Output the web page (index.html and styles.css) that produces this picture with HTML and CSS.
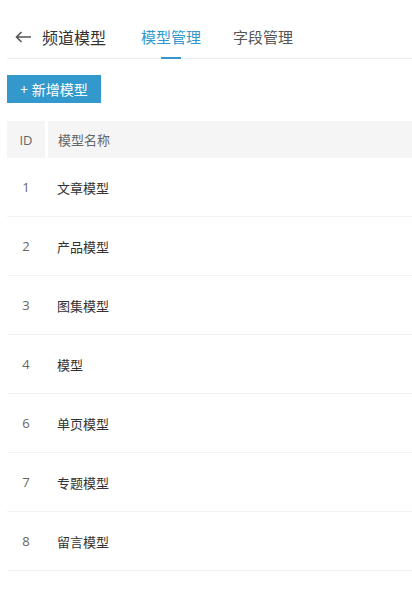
FILE: index.html
```html
<!DOCTYPE html>
<html lang="zh-CN">
<head>
    <meta charset="UTF-8">
    <meta name="viewport" content="width=device-width, initial-scale=1.0">
    <title>频道模型</title>
    <link rel="stylesheet" href="styles.css">
</head>
<body>
    <div class="page">
        <div class="header">
            <a class="back" href="#">
                <svg width="16" height="12" viewBox="0 0 16 12" fill="none" stroke="#555" stroke-width="1.6">
                    <path d="M16 6H1.5M6.5 1L1.5 6l5 5"/>
                </svg>
            </a>
            <div class="title">频道模型</div>
            <a class="tab active" href="#">模型管理</a>
            <a class="tab" href="#">字段管理</a>
        </div>

        <button class="btn-add">+ 新增模型</button>

        <div class="table">
            <div class="thead">
                <div class="cell-id">ID</div>
                <div class="cell-name">模型名称</div>
            </div>
            <div class="row"><div class="cell-id">1</div><div class="cell-name">文章模型</div></div>
            <div class="row"><div class="cell-id">2</div><div class="cell-name">产品模型</div></div>
            <div class="row"><div class="cell-id">3</div><div class="cell-name">图集模型</div></div>
            <div class="row"><div class="cell-id">4</div><div class="cell-name">模型</div></div>
            <div class="row"><div class="cell-id">6</div><div class="cell-name">单页模型</div></div>
            <div class="row"><div class="cell-id">7</div><div class="cell-name">专题模型</div></div>
            <div class="row"><div class="cell-id">8</div><div class="cell-name">留言模型</div></div>
        </div>
    </div>
</body>
</html>
```

FILE: styles.css
```css
body {
    margin: 0;
    font-family: "Open Sans", "Noto Sans CJK SC", sans-serif;
    color: #333;
    background: #fff;
}

.page {
    padding-left: 7px;
}

.header {
    display: flex;
    align-items: center;
    height: 42px;
    padding-top: 16px;
    border-bottom: 1px solid #eee;
}

.back {
    display: flex;
    margin-left: 8px;
    margin-right: 11px;
}

.title {
    font-size: 16px;
    color: #333;
    margin-right: 35px;
}

.tab {
    position: relative;
    height: 42px;
    line-height: 42px;
    font-size: 15px;
    color: #555;
    text-decoration: none;
    margin-right: 32px;
}

.tab.active {
    color: #3399cc;
}

.tab.active::after {
    content: "";
    position: absolute;
    left: 50%;
    bottom: -1px;
    width: 20px;
    height: 2px;
    margin-left: -10px;
    background: #3399cc;
}

.btn-add {
    display: block;
    margin-top: 16px;
    height: 28px;
    padding: 0 13px;
    border: none;
    background: #3399cc;
    color: #fff;
    font-family: inherit;
    font-size: 14px;
}

.table {
    margin-top: 18px;
    font-size: 13px;
}

.thead {
    display: grid;
    grid-template-columns: 38px 1fr;
    column-gap: 3px;
    height: 37px;
    align-items: stretch;
}

.thead > div {
    display: flex;
    align-items: center;
    background: #f5f5f5;
    color: #666;
}

.thead .cell-id {
    justify-content: center;
}

.thead .cell-name {
    padding-left: 10px;
}

.row {
    display: grid;
    grid-template-columns: 38px 1fr;
    column-gap: 3px;
    align-items: center;
    height: 58px;
    border-bottom: 1px solid #f2f2f2;
}

.row .cell-id {
    text-align: center;
    color: #666;
}

.row .cell-name {
    padding-left: 9px;
    color: #333;
}
```
